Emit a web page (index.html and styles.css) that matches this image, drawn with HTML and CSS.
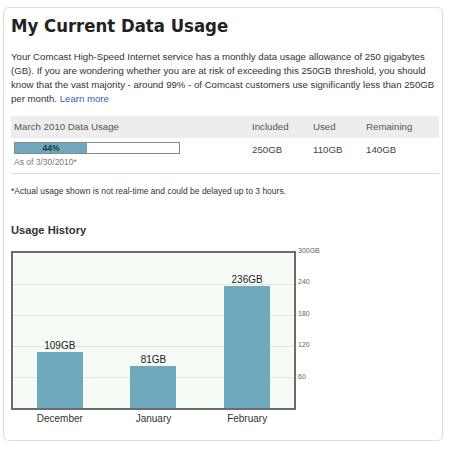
FILE: index.html
```html
<!DOCTYPE html>
<html>
<head>
<meta charset="utf-8">
<link rel="stylesheet" href="styles.css">
</head>
<body>
<div class="card">
  <h1 class="title">My Current Data Usage</h1>
  <p class="intro">Your Comcast High-Speed Internet service has a monthly data usage allowance of 250 gigabytes<br>(GB). If you are wondering whether you are at risk of exceeding this 250GB threshold, you should<br>know that the vast majority - around 99% - of Comcast customers use significantly less than 250GB<br>per month. <a class="link" href="#">Learn more</a></p>

  <div class="usage">
    <div class="usage-head">
      <div class="c1">March 2010 Data Usage</div>
      <div>Included</div>
      <div>Used</div>
      <div>Remaining</div>
    </div>
    <div class="usage-row">
      <div class="c1">
        <div class="meter"><div class="meter-fill" style="width:44%">44%</div></div>
        <div class="asof">As of 3/30/2010*</div>
      </div>
      <div class="val">250GB</div>
      <div class="val">110GB</div>
      <div class="val">140GB</div>
    </div>
  </div>

  <p class="note">*Actual usage shown is not real-time and could be delayed up to 3 hours.</p>

  <h2 class="subtitle">Usage History</h2>

  <div class="chart-wrap">
    <div class="chart">
      <div class="col"><div class="bar-label">109GB</div><div class="bar" style="height:56px"></div></div>
      <div class="col"><div class="bar-label">81GB</div><div class="bar" style="height:42px"></div></div>
      <div class="col"><div class="bar-label">236GB</div><div class="bar" style="height:122px"></div></div>
    </div>
    <div class="axis">
      <div>300GB</div>
      <div>240</div>
      <div>180</div>
      <div>120</div>
      <div>60</div>
    </div>
  </div>
  <div class="months">
    <div>December</div>
    <div>January</div>
    <div>February</div>
  </div>
</div>
</body>
</html>
```

FILE: styles.css
```css
html, body {
  margin: 0;
  padding: 0;
  background: #ffffff;
}
body {
  font-family: "Liberation Sans", Arial, sans-serif;
  color: #333333;
}
.card {
  box-sizing: border-box;
  margin: 7px 0 0 3px;
  width: 440px;
  height: 434px;
  border: 1px solid #dedede;
  border-radius: 6px;
  padding: 0 3px 0 7px;
  box-shadow: 0 0 2px rgba(0,0,0,0.06);
}
.title {
  margin: 7px 0 0 0;
  font-family: "DejaVu Sans", Verdana, sans-serif;
  font-weight: bold;
  font-size: 18.4px;
  font-stretch: condensed;
  line-height: 22px;
  color: #222222;
}
.intro {
  margin: 13px 0 0 0;
  font-size: 9.65px;
  line-height: 14px;
  white-space: nowrap;
  color: #333333;
}
.link {
  color: #3b5bb5;
  text-decoration: none;
}
.usage {
  margin-top: 10px;
  width: 428px;
}
.usage-head,
.usage-row {
  display: grid;
  grid-template-columns: 241px 61px 53px 1fr;
  font-size: 9.7px;
}
.usage-head {
  height: 22px;
  line-height: 22px;
  background: #ededed;
  color: #555555;
}
.c1 {
  padding-left: 3px;
}
.usage-row {
  padding: 4px 0 6px 0;
  border-bottom: 1px solid #dddddd;
}
.meter {
  box-sizing: border-box;
  width: 166px;
  height: 12px;
  border: 1px solid #8a8a8a;
  background: #ffffff;
}
.meter-fill {
  height: 100%;
  background: #6fa8be;
  color: #1c3a48;
  font-size: 8.5px;
  font-weight: bold;
  line-height: 11px;
  text-align: center;
}
.asof {
  margin-top: 3px;
  font-size: 8.5px;
  line-height: 10px;
  color: #7a7a7a;
}
.val {
  padding-top: 2px;
  line-height: 12px;
  color: #444444;
}
.note {
  margin: 11px 0 0 0;
  font-size: 8.5px;
  line-height: 12px;
  color: #333333;
}
.subtitle {
  margin: 26px 0 0 0;
  font-size: 11.2px;
  line-height: 14px;
  font-weight: bold;
  color: #333333;
}
.chart-wrap {
  margin-top: 14px;
  display: flex;
  align-items: flex-start;
}
.chart {
  box-sizing: border-box;
  width: 285px;
  height: 159px;
  border: 2px solid #6c6c6c;
  background-color: #f6fbf6;
  background-image: repeating-linear-gradient(to top, transparent 0, transparent 30px, #dfe6df 30px, #dfe6df 31px);
  background-size: 100% 124px;
  background-position: bottom left;
  background-repeat: no-repeat;
  display: flex;
  align-items: flex-end;
}
.col {
  width: 93.67px;
  display: flex;
  flex-direction: column;
  align-items: center;
  justify-content: flex-end;
}
.bar-label {
  font-size: 10px;
  line-height: 11px;
  margin-bottom: 1px;
  color: #222222;
}
.bar {
  width: 46px;
  background: #6fa9bd;
}
.axis {
  margin-top: -4px;
  padding-left: 2px;
  display: flex;
  flex-direction: column;
  gap: 23.4px;
  font-size: 7px;
  line-height: 8px;
  color: #666666;
}
.months {
  display: flex;
  padding: 3px 0 0 2px;
  width: 281px;
  font-size: 10px;
  line-height: 12px;
  color: #333333;
}
.months div {
  width: 93.67px;
  text-align: center;
}
```
